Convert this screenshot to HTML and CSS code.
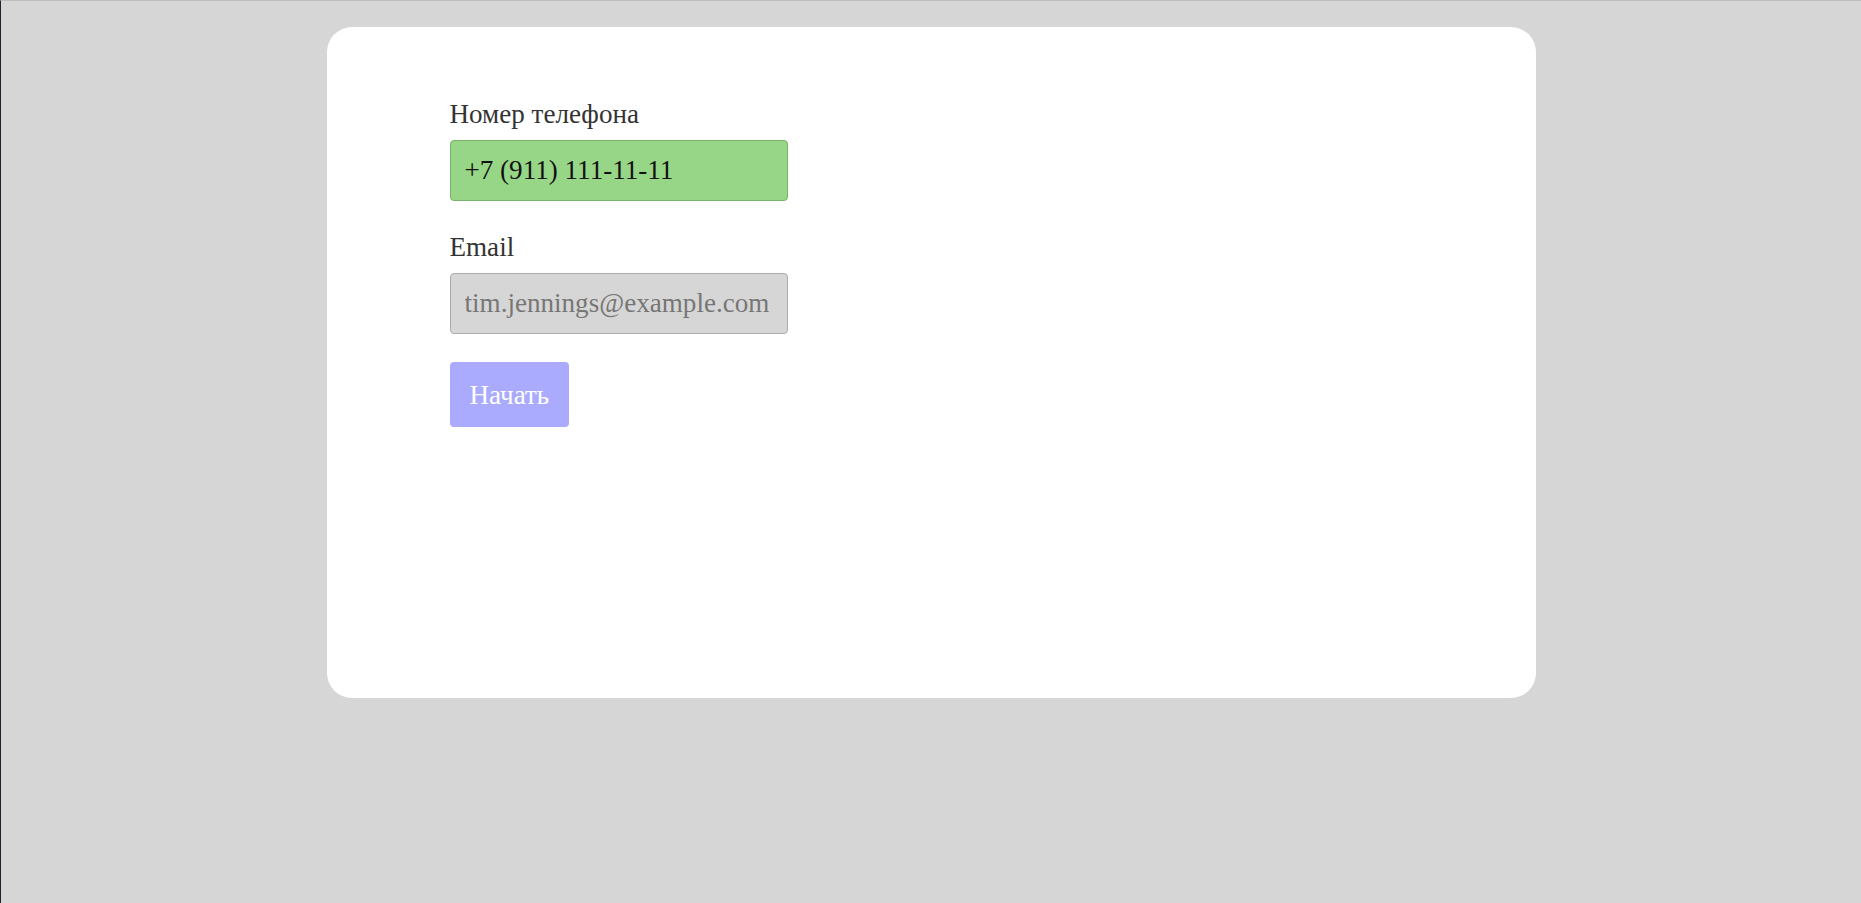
FILE: index.html
```html
<!DOCTYPE html>
<html lang="ru">
<head>
<meta charset="utf-8">
<title>Форма</title>
<link rel="stylesheet" href="styles.css">
</head>
<body>
<main class="card">
  <form class="form">
    <label class="field">
      <span class="field-label">Номер телефона</span>
      <input class="input input-phone" type="text" value="+7 (911) 111-11-11">
    </label>
    <label class="field">
      <span class="field-label">Email</span>
      <input class="input input-email" type="text" value="tim.jennings@example.com" disabled>
    </label>
    <button class="btn" type="button">Начать</button>
  </form>
</main>
</body>
</html>
```

FILE: styles.css
```css
html {
  background: #d6d6d6;
}
body {
  margin: 0;
  min-height: 100vh;
  box-sizing: border-box;
  border-top: 1px solid #bdbdbd;
  border-left: 1px solid #1f2330;
  background: #d6d6d6;
  font-family: "Liberation Serif", "Times New Roman", serif;
  font-size: 27.1px;
  color: #333;
  padding-top: 26px;
}
.card {
  width: 65%;
  height: 671px;
  box-sizing: border-box;
  margin: 0 auto;
  background: #fff;
  border-radius: 25px;
  padding: 72px 123px;
}
.form {
  display: flex;
  flex-direction: column;
  align-items: flex-start;
}
.field {
  display: flex;
  flex-direction: column;
  align-items: flex-start;
  gap: 11px;
  margin-bottom: 31px;
}
.field-label {
  line-height: 30px;
}
.input {
  width: 338px;
  height: 61px;
  box-sizing: border-box;
  margin: 0;
  padding: 0 14px;
  border-radius: 4px;
  font-family: "Liberation Serif", "Times New Roman", serif;
  font-size: 27.1px;
  outline: none;
}
.input-phone {
  background: #98d687;
  border: 1px solid #78b36a;
  color: #111;
}
.input-email {
  background: #d6d6d6;
  border: 1px solid #acacac;
  color: #767676;
  -webkit-text-fill-color: #767676;
  opacity: 1;
}
.field:last-of-type {
  margin-bottom: 28px;
}
.btn {
  height: 65px;
  padding: 2px 20px 0;
  background: #aaaaff;
  border: none;
  border-radius: 4px;
  color: #fff;
  font-family: "Liberation Serif", "Times New Roman", serif;
  font-size: 27.1px;
}
```
